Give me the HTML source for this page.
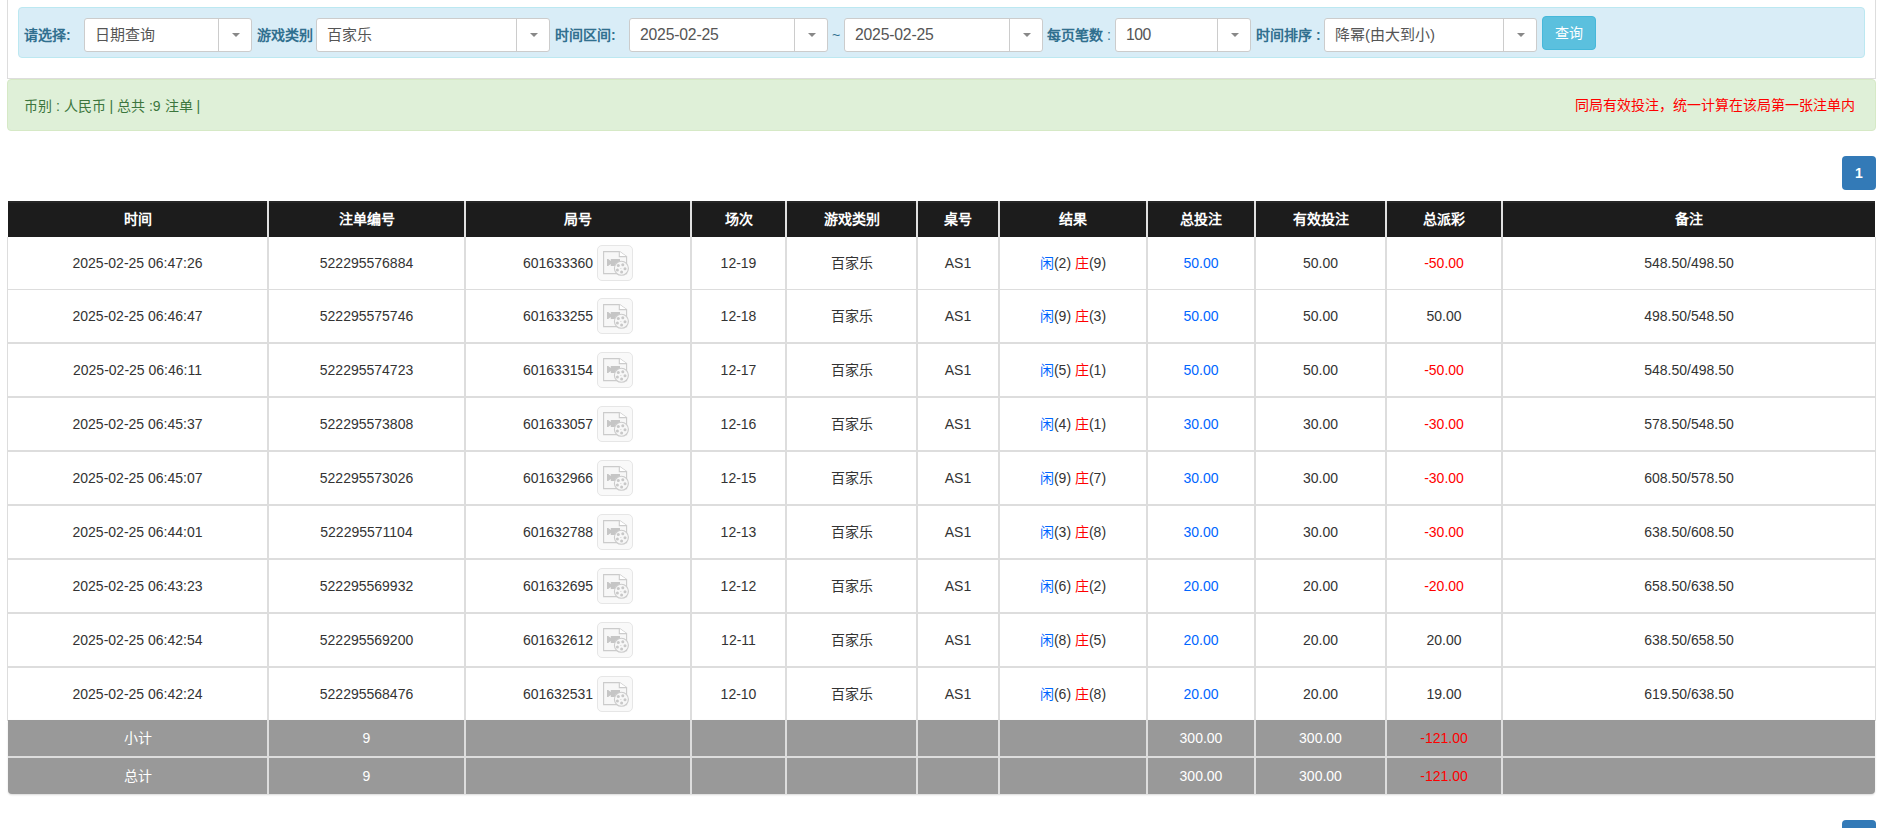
<!DOCTYPE html><html lang="zh-CN"><head><meta charset="utf-8"><style>
*{box-sizing:border-box;margin:0;padding:0}
html,body{width:1887px;height:828px;overflow:hidden;background:#fff;font-family:"Liberation Sans", sans-serif;font-size:14px;line-height:20px;color:#333}
.a{position:absolute}
.lbl{position:absolute;top:18px;height:34px;line-height:34px;font-weight:bold;color:#31708f;white-space:nowrap}
.sel{position:absolute;top:18px;height:34px;border:1px solid #ccc;border-radius:3px;background:#fff;color:#555;line-height:32px;padding-left:10px;white-space:nowrap;font-size:15px}
.sel .d{position:absolute;top:0;bottom:0;width:1px;background:#ccc}
.sel .c{position:absolute;top:14px;width:0;height:0;border-left:4px solid transparent;border-right:4px solid transparent;border-top:4px solid #888}
.cell{position:absolute;display:flex;align-items:center;justify-content:center;white-space:nowrap}
.hd{color:#fff;font-weight:bold}
.ic{display:inline-block;width:36px;height:36px;border:1px solid #e6e6e6;border-radius:5px;background:#f9f9f9;margin-left:4px;position:relative}
.ic svg{position:absolute;left:-1px;top:-1px}
.b{color:#0066ff} .r{color:#ff0000}
</style></head><body>
<div class="a" style="left:7px;top:-10px;width:1869px;height:89px;border:1px solid #ddd;border-top:0"></div>
<div class="a" style="left:18px;top:7px;width:1847px;height:51px;border:1px solid #bce8f1;background:#d9edf7;border-radius:4px"></div>
<div class="lbl" style="left:24px">请选择:</div>
<div class="sel" style="left:84px;width:168px;line-height:32px;">日期查询<span class="d" style="left:133px"></span><span class="c" style="left:147px"></span></div>
<div class="lbl" style="left:257px">游戏类别</div>
<div class="sel" style="left:316px;width:234px;line-height:32px;">百家乐<span class="d" style="left:199px"></span><span class="c" style="left:213px"></span></div>
<div class="lbl" style="left:555px">时间区间:</div>
<div class="sel" style="left:629px;width:199px;line-height:31px;font-size:15.75px;letter-spacing:-0.2px">2025-02-25<span class="d" style="left:164px"></span><span class="c" style="left:178px"></span></div>
<div class="lbl" style="left:832px;font-weight:normal">~</div>
<div class="sel" style="left:844px;width:199px;line-height:31px;font-size:15.75px;letter-spacing:-0.2px">2025-02-25<span class="d" style="left:164px"></span><span class="c" style="left:178px"></span></div>
<div class="lbl" style="left:1047px">每页笔数 <span style="font-weight:normal">:</span></div>
<div class="sel" style="left:1115px;width:136px;line-height:31px;font-size:15.75px;letter-spacing:-0.5px">100<span class="d" style="left:101px"></span><span class="c" style="left:115px"></span></div>
<div class="lbl" style="left:1256px">时间排序 :</div>
<div class="sel" style="left:1324px;width:213px;line-height:32px;">降幂(由大到小)<span class="d" style="left:178px"></span><span class="c" style="left:192px"></span></div>
<div class="a" style="left:1542px;top:16px;width:54px;height:34px;background:#5bc0de;border:1px solid #46b8da;border-radius:4px;color:#fff;text-align:center;line-height:32px;font-size:14px">查询</div>
<div class="a" style="left:7px;top:79px;width:1869px;height:52px;border:1px solid #d6e9c6;background:#dff0d8;border-radius:4px"></div>
<div class="a" style="left:24px;top:96px;line-height:20px;color:#3c763d;white-space:nowrap">币别 : 人民币 | 总共 :9 注单 |</div>
<div class="a" style="right:32px;top:95px;line-height:20px;color:#ff0000;white-space:nowrap;font-size:14px">同局有效投注，统一计算在该局第一张注单内</div>
<div class="a" style="left:1842px;top:156px;width:34px;height:34px;background:#337ab7;border-radius:4px;color:#fff;text-align:center;line-height:34px;font-weight:bold">1</div>
<div class="a" style="left:1842px;top:820px;width:34px;height:34px;background:#337ab7;border-radius:4px;color:#fff;text-align:center;line-height:34px;font-weight:bold">1</div>
<div class="a" style="left:8px;top:201px;width:1867px;height:36px;background:#1c1c1c;border-top:2px solid #262626"></div>
<div class="a" style="left:267px;top:201px;width:2px;height:36px;background:#e0e0e0"></div>
<div class="a" style="left:464px;top:201px;width:2px;height:36px;background:#e0e0e0"></div>
<div class="a" style="left:690px;top:201px;width:2px;height:36px;background:#e0e0e0"></div>
<div class="a" style="left:785px;top:201px;width:2px;height:36px;background:#e0e0e0"></div>
<div class="a" style="left:916px;top:201px;width:2px;height:36px;background:#e0e0e0"></div>
<div class="a" style="left:998px;top:201px;width:2px;height:36px;background:#e0e0e0"></div>
<div class="a" style="left:1146px;top:201px;width:2px;height:36px;background:#e0e0e0"></div>
<div class="a" style="left:1254px;top:201px;width:2px;height:36px;background:#e0e0e0"></div>
<div class="a" style="left:1385px;top:201px;width:2px;height:36px;background:#e0e0e0"></div>
<div class="a" style="left:1501px;top:201px;width:2px;height:36px;background:#e0e0e0"></div>
<div class="cell hd" style="left:8px;top:201px;width:259px;height:36px">时间</div>
<div class="cell hd" style="left:269px;top:201px;width:195px;height:36px">注单编号</div>
<div class="cell hd" style="left:466px;top:201px;width:224px;height:36px">局号</div>
<div class="cell hd" style="left:692px;top:201px;width:93px;height:36px">场次</div>
<div class="cell hd" style="left:787px;top:201px;width:129px;height:36px">游戏类别</div>
<div class="cell hd" style="left:918px;top:201px;width:80px;height:36px">桌号</div>
<div class="cell hd" style="left:1000px;top:201px;width:146px;height:36px">结果</div>
<div class="cell hd" style="left:1148px;top:201px;width:106px;height:36px">总投注</div>
<div class="cell hd" style="left:1256px;top:201px;width:129px;height:36px">有效投注</div>
<div class="cell hd" style="left:1387px;top:201px;width:114px;height:36px">总派彩</div>
<div class="cell hd" style="left:1503px;top:201px;width:372px;height:36px">备注</div>
<div class="a" style="left:7px;top:237px;width:1px;height:484px;background:#ddd"></div>
<div class="a" style="left:1875px;top:237px;width:1px;height:484px;background:#ddd"></div>
<div class="a" style="left:267px;top:237px;width:2px;height:484px;background:#ddd"></div>
<div class="a" style="left:464px;top:237px;width:2px;height:484px;background:#ddd"></div>
<div class="a" style="left:690px;top:237px;width:2px;height:484px;background:#ddd"></div>
<div class="a" style="left:785px;top:237px;width:2px;height:484px;background:#ddd"></div>
<div class="a" style="left:916px;top:237px;width:2px;height:484px;background:#ddd"></div>
<div class="a" style="left:998px;top:237px;width:2px;height:484px;background:#ddd"></div>
<div class="a" style="left:1146px;top:237px;width:2px;height:484px;background:#ddd"></div>
<div class="a" style="left:1254px;top:237px;width:2px;height:484px;background:#ddd"></div>
<div class="a" style="left:1385px;top:237px;width:2px;height:484px;background:#ddd"></div>
<div class="a" style="left:1501px;top:237px;width:2px;height:484px;background:#ddd"></div>
<div class="a" style="left:8px;top:289px;width:1867px;height:1px;background:#ddd"></div>
<div class="cell" style="left:8px;top:237px;width:259px;height:52px"><span>2025-02-25 06:47:26</span></div>
<div class="cell" style="left:269px;top:237px;width:195px;height:52px"><span>522295576884</span></div>
<div class="cell" style="left:466px;top:237px;width:224px;height:52px"><span><b style="display:flex;align-items:center;font-weight:normal">601633360<span class="ic"><svg width="36" height="36" viewBox="0 0 36 36"><path d="M6.6 6.6h16l7 5v17H6.6z" fill="#f7f7f7" stroke="#cbcbcb" stroke-width="1.1"/><path d="M22.3 6.6v5h7.3" fill="#fff" stroke="#cbcbcb" stroke-width="1.1"/><path d="M10 14h1.2l2.6 2.1V14H23v7H13.8v-2.1L11.2 21H10z" fill="#c6c6c6"/><circle cx="24.4" cy="23.3" r="7" fill="#f7f7f7" stroke="#cbcbcb" stroke-width="1.1"/><circle cx="21.3" cy="20.6" r="1.5" fill="#c8c8c8"/><circle cx="25.8" cy="19.7" r="1.5" fill="#c8c8c8"/><circle cx="28" cy="23.7" r="1.5" fill="#c8c8c8"/><circle cx="24.6" cy="26.9" r="1.5" fill="#c8c8c8"/><circle cx="20.4" cy="24.9" r="1.5" fill="#c8c8c8"/><circle cx="23.9" cy="23.4" r=".5" fill="#c8c8c8"/></svg></span></b></span></div>
<div class="cell" style="left:692px;top:237px;width:93px;height:52px"><span>12-19</span></div>
<div class="cell" style="left:787px;top:237px;width:129px;height:52px"><span>百家乐</span></div>
<div class="cell" style="left:918px;top:237px;width:80px;height:52px"><span>AS1</span></div>
<div class="cell" style="left:1000px;top:237px;width:146px;height:52px"><span><span class="b">闲</span>(2) <span class="r">庄</span>(9)</span></div>
<div class="cell" style="left:1148px;top:237px;width:106px;height:52px"><span><span class="b">50.00</span></span></div>
<div class="cell" style="left:1256px;top:237px;width:129px;height:52px"><span>50.00</span></div>
<div class="cell" style="left:1387px;top:237px;width:114px;height:52px"><span><span class="r">-50.00</span></span></div>
<div class="cell" style="left:1503px;top:237px;width:372px;height:52px"><span>548.50/498.50</span></div>
<div class="a" style="left:8px;top:342px;width:1867px;height:2px;background:#ddd"></div>
<div class="cell" style="left:8px;top:290px;width:259px;height:52px"><span>2025-02-25 06:46:47</span></div>
<div class="cell" style="left:269px;top:290px;width:195px;height:52px"><span>522295575746</span></div>
<div class="cell" style="left:466px;top:290px;width:224px;height:52px"><span><b style="display:flex;align-items:center;font-weight:normal">601633255<span class="ic"><svg width="36" height="36" viewBox="0 0 36 36"><path d="M6.6 6.6h16l7 5v17H6.6z" fill="#f7f7f7" stroke="#cbcbcb" stroke-width="1.1"/><path d="M22.3 6.6v5h7.3" fill="#fff" stroke="#cbcbcb" stroke-width="1.1"/><path d="M10 14h1.2l2.6 2.1V14H23v7H13.8v-2.1L11.2 21H10z" fill="#c6c6c6"/><circle cx="24.4" cy="23.3" r="7" fill="#f7f7f7" stroke="#cbcbcb" stroke-width="1.1"/><circle cx="21.3" cy="20.6" r="1.5" fill="#c8c8c8"/><circle cx="25.8" cy="19.7" r="1.5" fill="#c8c8c8"/><circle cx="28" cy="23.7" r="1.5" fill="#c8c8c8"/><circle cx="24.6" cy="26.9" r="1.5" fill="#c8c8c8"/><circle cx="20.4" cy="24.9" r="1.5" fill="#c8c8c8"/><circle cx="23.9" cy="23.4" r=".5" fill="#c8c8c8"/></svg></span></b></span></div>
<div class="cell" style="left:692px;top:290px;width:93px;height:52px"><span>12-18</span></div>
<div class="cell" style="left:787px;top:290px;width:129px;height:52px"><span>百家乐</span></div>
<div class="cell" style="left:918px;top:290px;width:80px;height:52px"><span>AS1</span></div>
<div class="cell" style="left:1000px;top:290px;width:146px;height:52px"><span><span class="b">闲</span>(9) <span class="r">庄</span>(3)</span></div>
<div class="cell" style="left:1148px;top:290px;width:106px;height:52px"><span><span class="b">50.00</span></span></div>
<div class="cell" style="left:1256px;top:290px;width:129px;height:52px"><span>50.00</span></div>
<div class="cell" style="left:1387px;top:290px;width:114px;height:52px"><span>50.00</span></div>
<div class="cell" style="left:1503px;top:290px;width:372px;height:52px"><span>498.50/548.50</span></div>
<div class="a" style="left:8px;top:396px;width:1867px;height:2px;background:#ddd"></div>
<div class="cell" style="left:8px;top:344px;width:259px;height:52px"><span>2025-02-25 06:46:11</span></div>
<div class="cell" style="left:269px;top:344px;width:195px;height:52px"><span>522295574723</span></div>
<div class="cell" style="left:466px;top:344px;width:224px;height:52px"><span><b style="display:flex;align-items:center;font-weight:normal">601633154<span class="ic"><svg width="36" height="36" viewBox="0 0 36 36"><path d="M6.6 6.6h16l7 5v17H6.6z" fill="#f7f7f7" stroke="#cbcbcb" stroke-width="1.1"/><path d="M22.3 6.6v5h7.3" fill="#fff" stroke="#cbcbcb" stroke-width="1.1"/><path d="M10 14h1.2l2.6 2.1V14H23v7H13.8v-2.1L11.2 21H10z" fill="#c6c6c6"/><circle cx="24.4" cy="23.3" r="7" fill="#f7f7f7" stroke="#cbcbcb" stroke-width="1.1"/><circle cx="21.3" cy="20.6" r="1.5" fill="#c8c8c8"/><circle cx="25.8" cy="19.7" r="1.5" fill="#c8c8c8"/><circle cx="28" cy="23.7" r="1.5" fill="#c8c8c8"/><circle cx="24.6" cy="26.9" r="1.5" fill="#c8c8c8"/><circle cx="20.4" cy="24.9" r="1.5" fill="#c8c8c8"/><circle cx="23.9" cy="23.4" r=".5" fill="#c8c8c8"/></svg></span></b></span></div>
<div class="cell" style="left:692px;top:344px;width:93px;height:52px"><span>12-17</span></div>
<div class="cell" style="left:787px;top:344px;width:129px;height:52px"><span>百家乐</span></div>
<div class="cell" style="left:918px;top:344px;width:80px;height:52px"><span>AS1</span></div>
<div class="cell" style="left:1000px;top:344px;width:146px;height:52px"><span><span class="b">闲</span>(5) <span class="r">庄</span>(1)</span></div>
<div class="cell" style="left:1148px;top:344px;width:106px;height:52px"><span><span class="b">50.00</span></span></div>
<div class="cell" style="left:1256px;top:344px;width:129px;height:52px"><span>50.00</span></div>
<div class="cell" style="left:1387px;top:344px;width:114px;height:52px"><span><span class="r">-50.00</span></span></div>
<div class="cell" style="left:1503px;top:344px;width:372px;height:52px"><span>548.50/498.50</span></div>
<div class="a" style="left:8px;top:450px;width:1867px;height:2px;background:#ddd"></div>
<div class="cell" style="left:8px;top:398px;width:259px;height:52px"><span>2025-02-25 06:45:37</span></div>
<div class="cell" style="left:269px;top:398px;width:195px;height:52px"><span>522295573808</span></div>
<div class="cell" style="left:466px;top:398px;width:224px;height:52px"><span><b style="display:flex;align-items:center;font-weight:normal">601633057<span class="ic"><svg width="36" height="36" viewBox="0 0 36 36"><path d="M6.6 6.6h16l7 5v17H6.6z" fill="#f7f7f7" stroke="#cbcbcb" stroke-width="1.1"/><path d="M22.3 6.6v5h7.3" fill="#fff" stroke="#cbcbcb" stroke-width="1.1"/><path d="M10 14h1.2l2.6 2.1V14H23v7H13.8v-2.1L11.2 21H10z" fill="#c6c6c6"/><circle cx="24.4" cy="23.3" r="7" fill="#f7f7f7" stroke="#cbcbcb" stroke-width="1.1"/><circle cx="21.3" cy="20.6" r="1.5" fill="#c8c8c8"/><circle cx="25.8" cy="19.7" r="1.5" fill="#c8c8c8"/><circle cx="28" cy="23.7" r="1.5" fill="#c8c8c8"/><circle cx="24.6" cy="26.9" r="1.5" fill="#c8c8c8"/><circle cx="20.4" cy="24.9" r="1.5" fill="#c8c8c8"/><circle cx="23.9" cy="23.4" r=".5" fill="#c8c8c8"/></svg></span></b></span></div>
<div class="cell" style="left:692px;top:398px;width:93px;height:52px"><span>12-16</span></div>
<div class="cell" style="left:787px;top:398px;width:129px;height:52px"><span>百家乐</span></div>
<div class="cell" style="left:918px;top:398px;width:80px;height:52px"><span>AS1</span></div>
<div class="cell" style="left:1000px;top:398px;width:146px;height:52px"><span><span class="b">闲</span>(4) <span class="r">庄</span>(1)</span></div>
<div class="cell" style="left:1148px;top:398px;width:106px;height:52px"><span><span class="b">30.00</span></span></div>
<div class="cell" style="left:1256px;top:398px;width:129px;height:52px"><span>30.00</span></div>
<div class="cell" style="left:1387px;top:398px;width:114px;height:52px"><span><span class="r">-30.00</span></span></div>
<div class="cell" style="left:1503px;top:398px;width:372px;height:52px"><span>578.50/548.50</span></div>
<div class="a" style="left:8px;top:504px;width:1867px;height:2px;background:#ddd"></div>
<div class="cell" style="left:8px;top:452px;width:259px;height:52px"><span>2025-02-25 06:45:07</span></div>
<div class="cell" style="left:269px;top:452px;width:195px;height:52px"><span>522295573026</span></div>
<div class="cell" style="left:466px;top:452px;width:224px;height:52px"><span><b style="display:flex;align-items:center;font-weight:normal">601632966<span class="ic"><svg width="36" height="36" viewBox="0 0 36 36"><path d="M6.6 6.6h16l7 5v17H6.6z" fill="#f7f7f7" stroke="#cbcbcb" stroke-width="1.1"/><path d="M22.3 6.6v5h7.3" fill="#fff" stroke="#cbcbcb" stroke-width="1.1"/><path d="M10 14h1.2l2.6 2.1V14H23v7H13.8v-2.1L11.2 21H10z" fill="#c6c6c6"/><circle cx="24.4" cy="23.3" r="7" fill="#f7f7f7" stroke="#cbcbcb" stroke-width="1.1"/><circle cx="21.3" cy="20.6" r="1.5" fill="#c8c8c8"/><circle cx="25.8" cy="19.7" r="1.5" fill="#c8c8c8"/><circle cx="28" cy="23.7" r="1.5" fill="#c8c8c8"/><circle cx="24.6" cy="26.9" r="1.5" fill="#c8c8c8"/><circle cx="20.4" cy="24.9" r="1.5" fill="#c8c8c8"/><circle cx="23.9" cy="23.4" r=".5" fill="#c8c8c8"/></svg></span></b></span></div>
<div class="cell" style="left:692px;top:452px;width:93px;height:52px"><span>12-15</span></div>
<div class="cell" style="left:787px;top:452px;width:129px;height:52px"><span>百家乐</span></div>
<div class="cell" style="left:918px;top:452px;width:80px;height:52px"><span>AS1</span></div>
<div class="cell" style="left:1000px;top:452px;width:146px;height:52px"><span><span class="b">闲</span>(9) <span class="r">庄</span>(7)</span></div>
<div class="cell" style="left:1148px;top:452px;width:106px;height:52px"><span><span class="b">30.00</span></span></div>
<div class="cell" style="left:1256px;top:452px;width:129px;height:52px"><span>30.00</span></div>
<div class="cell" style="left:1387px;top:452px;width:114px;height:52px"><span><span class="r">-30.00</span></span></div>
<div class="cell" style="left:1503px;top:452px;width:372px;height:52px"><span>608.50/578.50</span></div>
<div class="a" style="left:8px;top:558px;width:1867px;height:2px;background:#ddd"></div>
<div class="cell" style="left:8px;top:506px;width:259px;height:52px"><span>2025-02-25 06:44:01</span></div>
<div class="cell" style="left:269px;top:506px;width:195px;height:52px"><span>522295571104</span></div>
<div class="cell" style="left:466px;top:506px;width:224px;height:52px"><span><b style="display:flex;align-items:center;font-weight:normal">601632788<span class="ic"><svg width="36" height="36" viewBox="0 0 36 36"><path d="M6.6 6.6h16l7 5v17H6.6z" fill="#f7f7f7" stroke="#cbcbcb" stroke-width="1.1"/><path d="M22.3 6.6v5h7.3" fill="#fff" stroke="#cbcbcb" stroke-width="1.1"/><path d="M10 14h1.2l2.6 2.1V14H23v7H13.8v-2.1L11.2 21H10z" fill="#c6c6c6"/><circle cx="24.4" cy="23.3" r="7" fill="#f7f7f7" stroke="#cbcbcb" stroke-width="1.1"/><circle cx="21.3" cy="20.6" r="1.5" fill="#c8c8c8"/><circle cx="25.8" cy="19.7" r="1.5" fill="#c8c8c8"/><circle cx="28" cy="23.7" r="1.5" fill="#c8c8c8"/><circle cx="24.6" cy="26.9" r="1.5" fill="#c8c8c8"/><circle cx="20.4" cy="24.9" r="1.5" fill="#c8c8c8"/><circle cx="23.9" cy="23.4" r=".5" fill="#c8c8c8"/></svg></span></b></span></div>
<div class="cell" style="left:692px;top:506px;width:93px;height:52px"><span>12-13</span></div>
<div class="cell" style="left:787px;top:506px;width:129px;height:52px"><span>百家乐</span></div>
<div class="cell" style="left:918px;top:506px;width:80px;height:52px"><span>AS1</span></div>
<div class="cell" style="left:1000px;top:506px;width:146px;height:52px"><span><span class="b">闲</span>(3) <span class="r">庄</span>(8)</span></div>
<div class="cell" style="left:1148px;top:506px;width:106px;height:52px"><span><span class="b">30.00</span></span></div>
<div class="cell" style="left:1256px;top:506px;width:129px;height:52px"><span>30.00</span></div>
<div class="cell" style="left:1387px;top:506px;width:114px;height:52px"><span><span class="r">-30.00</span></span></div>
<div class="cell" style="left:1503px;top:506px;width:372px;height:52px"><span>638.50/608.50</span></div>
<div class="a" style="left:8px;top:612px;width:1867px;height:2px;background:#ddd"></div>
<div class="cell" style="left:8px;top:560px;width:259px;height:52px"><span>2025-02-25 06:43:23</span></div>
<div class="cell" style="left:269px;top:560px;width:195px;height:52px"><span>522295569932</span></div>
<div class="cell" style="left:466px;top:560px;width:224px;height:52px"><span><b style="display:flex;align-items:center;font-weight:normal">601632695<span class="ic"><svg width="36" height="36" viewBox="0 0 36 36"><path d="M6.6 6.6h16l7 5v17H6.6z" fill="#f7f7f7" stroke="#cbcbcb" stroke-width="1.1"/><path d="M22.3 6.6v5h7.3" fill="#fff" stroke="#cbcbcb" stroke-width="1.1"/><path d="M10 14h1.2l2.6 2.1V14H23v7H13.8v-2.1L11.2 21H10z" fill="#c6c6c6"/><circle cx="24.4" cy="23.3" r="7" fill="#f7f7f7" stroke="#cbcbcb" stroke-width="1.1"/><circle cx="21.3" cy="20.6" r="1.5" fill="#c8c8c8"/><circle cx="25.8" cy="19.7" r="1.5" fill="#c8c8c8"/><circle cx="28" cy="23.7" r="1.5" fill="#c8c8c8"/><circle cx="24.6" cy="26.9" r="1.5" fill="#c8c8c8"/><circle cx="20.4" cy="24.9" r="1.5" fill="#c8c8c8"/><circle cx="23.9" cy="23.4" r=".5" fill="#c8c8c8"/></svg></span></b></span></div>
<div class="cell" style="left:692px;top:560px;width:93px;height:52px"><span>12-12</span></div>
<div class="cell" style="left:787px;top:560px;width:129px;height:52px"><span>百家乐</span></div>
<div class="cell" style="left:918px;top:560px;width:80px;height:52px"><span>AS1</span></div>
<div class="cell" style="left:1000px;top:560px;width:146px;height:52px"><span><span class="b">闲</span>(6) <span class="r">庄</span>(2)</span></div>
<div class="cell" style="left:1148px;top:560px;width:106px;height:52px"><span><span class="b">20.00</span></span></div>
<div class="cell" style="left:1256px;top:560px;width:129px;height:52px"><span>20.00</span></div>
<div class="cell" style="left:1387px;top:560px;width:114px;height:52px"><span><span class="r">-20.00</span></span></div>
<div class="cell" style="left:1503px;top:560px;width:372px;height:52px"><span>658.50/638.50</span></div>
<div class="a" style="left:8px;top:666px;width:1867px;height:2px;background:#ddd"></div>
<div class="cell" style="left:8px;top:614px;width:259px;height:52px"><span>2025-02-25 06:42:54</span></div>
<div class="cell" style="left:269px;top:614px;width:195px;height:52px"><span>522295569200</span></div>
<div class="cell" style="left:466px;top:614px;width:224px;height:52px"><span><b style="display:flex;align-items:center;font-weight:normal">601632612<span class="ic"><svg width="36" height="36" viewBox="0 0 36 36"><path d="M6.6 6.6h16l7 5v17H6.6z" fill="#f7f7f7" stroke="#cbcbcb" stroke-width="1.1"/><path d="M22.3 6.6v5h7.3" fill="#fff" stroke="#cbcbcb" stroke-width="1.1"/><path d="M10 14h1.2l2.6 2.1V14H23v7H13.8v-2.1L11.2 21H10z" fill="#c6c6c6"/><circle cx="24.4" cy="23.3" r="7" fill="#f7f7f7" stroke="#cbcbcb" stroke-width="1.1"/><circle cx="21.3" cy="20.6" r="1.5" fill="#c8c8c8"/><circle cx="25.8" cy="19.7" r="1.5" fill="#c8c8c8"/><circle cx="28" cy="23.7" r="1.5" fill="#c8c8c8"/><circle cx="24.6" cy="26.9" r="1.5" fill="#c8c8c8"/><circle cx="20.4" cy="24.9" r="1.5" fill="#c8c8c8"/><circle cx="23.9" cy="23.4" r=".5" fill="#c8c8c8"/></svg></span></b></span></div>
<div class="cell" style="left:692px;top:614px;width:93px;height:52px"><span>12-11</span></div>
<div class="cell" style="left:787px;top:614px;width:129px;height:52px"><span>百家乐</span></div>
<div class="cell" style="left:918px;top:614px;width:80px;height:52px"><span>AS1</span></div>
<div class="cell" style="left:1000px;top:614px;width:146px;height:52px"><span><span class="b">闲</span>(8) <span class="r">庄</span>(5)</span></div>
<div class="cell" style="left:1148px;top:614px;width:106px;height:52px"><span><span class="b">20.00</span></span></div>
<div class="cell" style="left:1256px;top:614px;width:129px;height:52px"><span>20.00</span></div>
<div class="cell" style="left:1387px;top:614px;width:114px;height:52px"><span>20.00</span></div>
<div class="cell" style="left:1503px;top:614px;width:372px;height:52px"><span>638.50/658.50</span></div>
<div class="cell" style="left:8px;top:668px;width:259px;height:52px"><span>2025-02-25 06:42:24</span></div>
<div class="cell" style="left:269px;top:668px;width:195px;height:52px"><span>522295568476</span></div>
<div class="cell" style="left:466px;top:668px;width:224px;height:52px"><span><b style="display:flex;align-items:center;font-weight:normal">601632531<span class="ic"><svg width="36" height="36" viewBox="0 0 36 36"><path d="M6.6 6.6h16l7 5v17H6.6z" fill="#f7f7f7" stroke="#cbcbcb" stroke-width="1.1"/><path d="M22.3 6.6v5h7.3" fill="#fff" stroke="#cbcbcb" stroke-width="1.1"/><path d="M10 14h1.2l2.6 2.1V14H23v7H13.8v-2.1L11.2 21H10z" fill="#c6c6c6"/><circle cx="24.4" cy="23.3" r="7" fill="#f7f7f7" stroke="#cbcbcb" stroke-width="1.1"/><circle cx="21.3" cy="20.6" r="1.5" fill="#c8c8c8"/><circle cx="25.8" cy="19.7" r="1.5" fill="#c8c8c8"/><circle cx="28" cy="23.7" r="1.5" fill="#c8c8c8"/><circle cx="24.6" cy="26.9" r="1.5" fill="#c8c8c8"/><circle cx="20.4" cy="24.9" r="1.5" fill="#c8c8c8"/><circle cx="23.9" cy="23.4" r=".5" fill="#c8c8c8"/></svg></span></b></span></div>
<div class="cell" style="left:692px;top:668px;width:93px;height:52px"><span>12-10</span></div>
<div class="cell" style="left:787px;top:668px;width:129px;height:52px"><span>百家乐</span></div>
<div class="cell" style="left:918px;top:668px;width:80px;height:52px"><span>AS1</span></div>
<div class="cell" style="left:1000px;top:668px;width:146px;height:52px"><span><span class="b">闲</span>(6) <span class="r">庄</span>(8)</span></div>
<div class="cell" style="left:1148px;top:668px;width:106px;height:52px"><span><span class="b">20.00</span></span></div>
<div class="cell" style="left:1256px;top:668px;width:129px;height:52px"><span>20.00</span></div>
<div class="cell" style="left:1387px;top:668px;width:114px;height:52px"><span>19.00</span></div>
<div class="cell" style="left:1503px;top:668px;width:372px;height:52px"><span>619.50/638.50</span></div>
<div class="a" style="left:8px;top:720px;width:1867px;height:74px;background:#999;border-radius:0 0 4px 4px;box-shadow:0 1px 2px rgba(0,0,0,.15)"></div>
<div class="a" style="left:8px;top:756px;width:1867px;height:2px;background:#ddd"></div>
<div class="a" style="left:267px;top:720px;width:2px;height:74px;background:#ddd"></div>
<div class="a" style="left:464px;top:720px;width:2px;height:74px;background:#ddd"></div>
<div class="a" style="left:690px;top:720px;width:2px;height:74px;background:#ddd"></div>
<div class="a" style="left:785px;top:720px;width:2px;height:74px;background:#ddd"></div>
<div class="a" style="left:916px;top:720px;width:2px;height:74px;background:#ddd"></div>
<div class="a" style="left:998px;top:720px;width:2px;height:74px;background:#ddd"></div>
<div class="a" style="left:1146px;top:720px;width:2px;height:74px;background:#ddd"></div>
<div class="a" style="left:1254px;top:720px;width:2px;height:74px;background:#ddd"></div>
<div class="a" style="left:1385px;top:720px;width:2px;height:74px;background:#ddd"></div>
<div class="a" style="left:1501px;top:720px;width:2px;height:74px;background:#ddd"></div>
<div class="cell" style="left:8px;top:720px;width:259px;height:36px;color:#fff"><span>小计</span></div>
<div class="cell" style="left:269px;top:720px;width:195px;height:36px;color:#fff"><span>9</span></div>
<div class="cell" style="left:466px;top:720px;width:224px;height:36px;color:#fff"><span></span></div>
<div class="cell" style="left:692px;top:720px;width:93px;height:36px;color:#fff"><span></span></div>
<div class="cell" style="left:787px;top:720px;width:129px;height:36px;color:#fff"><span></span></div>
<div class="cell" style="left:918px;top:720px;width:80px;height:36px;color:#fff"><span></span></div>
<div class="cell" style="left:1000px;top:720px;width:146px;height:36px;color:#fff"><span></span></div>
<div class="cell" style="left:1148px;top:720px;width:106px;height:36px;color:#fff"><span>300.00</span></div>
<div class="cell" style="left:1256px;top:720px;width:129px;height:36px;color:#fff"><span>300.00</span></div>
<div class="cell" style="left:1387px;top:720px;width:114px;height:36px;color:#fff"><span><span class="r">-121.00</span></span></div>
<div class="cell" style="left:1503px;top:720px;width:372px;height:36px;color:#fff"><span></span></div>
<div class="cell" style="left:8px;top:758px;width:259px;height:36px;color:#fff"><span>总计</span></div>
<div class="cell" style="left:269px;top:758px;width:195px;height:36px;color:#fff"><span>9</span></div>
<div class="cell" style="left:466px;top:758px;width:224px;height:36px;color:#fff"><span></span></div>
<div class="cell" style="left:692px;top:758px;width:93px;height:36px;color:#fff"><span></span></div>
<div class="cell" style="left:787px;top:758px;width:129px;height:36px;color:#fff"><span></span></div>
<div class="cell" style="left:918px;top:758px;width:80px;height:36px;color:#fff"><span></span></div>
<div class="cell" style="left:1000px;top:758px;width:146px;height:36px;color:#fff"><span></span></div>
<div class="cell" style="left:1148px;top:758px;width:106px;height:36px;color:#fff"><span>300.00</span></div>
<div class="cell" style="left:1256px;top:758px;width:129px;height:36px;color:#fff"><span>300.00</span></div>
<div class="cell" style="left:1387px;top:758px;width:114px;height:36px;color:#fff"><span><span class="r">-121.00</span></span></div>
<div class="cell" style="left:1503px;top:758px;width:372px;height:36px;color:#fff"><span></span></div>
</body></html>
